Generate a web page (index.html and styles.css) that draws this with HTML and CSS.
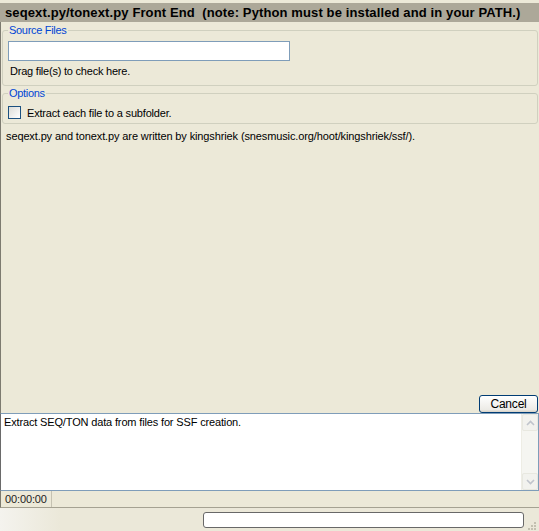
FILE: index.html
```html
<!DOCTYPE html>
<html>
<head>
<meta charset="utf-8">
<link rel="stylesheet" href="styles.css">
</head>
<body>
<div class="win">
  <div class="title">seqext.py/tonext.py Front End&nbsp; (note: Python must be installed and in your PATH.)</div>
  <div class="main">
    <fieldset class="group group-src">
      <legend>Source Files</legend>
      <div class="input"></div>
      <div class="hint">Drag file(s) to check here.</div>
    </fieldset>
    <fieldset class="group group-opt">
      <legend>Options</legend>
      <label class="check"><span class="box"></span><span>Extract each file to a subfolder.</span></label>
    </fieldset>
    <div class="credit">seqext.py and tonext.py are written by kingshriek (snesmusic.org/hoot/kingshriek/ssf/).</div>
    <div class="spacer"></div>
    <div class="btnrow"><div class="btn">Cancel</div></div>
  </div>
  <div class="log">
    <div class="logtext">Extract SEQ/TON data from files for SSF creation.</div>
    <div class="scroll">
      <div class="arrow up"><svg width="9" height="6" viewBox="0 0 9 6"><path d="M1 5 L4.5 1.5 L8 5" fill="none" stroke="#c0c4cc" stroke-width="1.6"/></svg></div>
      <div class="track"></div>
      <div class="arrow down"><svg width="9" height="6" viewBox="0 0 9 6"><path d="M1 1 L4.5 4.5 L8 1" fill="none" stroke="#c0c4cc" stroke-width="1.6"/></svg></div>
    </div>
  </div>
  <div class="status">
    <div class="time">00:00:00</div>
    <div class="rest"></div>
  </div>
  <div class="bottom">
    <div class="progress"></div>
    <div class="grip">
      <svg width="11" height="11" viewBox="0 0 11 11">
        <g fill="#c3c0b0">
          <rect x="8" y="2" width="2" height="2"/>
          <rect x="5" y="5" width="2" height="2"/><rect x="8" y="5" width="2" height="2"/>
          <rect x="2" y="8" width="2" height="2"/><rect x="5" y="8" width="2" height="2"/><rect x="8" y="8" width="2" height="2"/>
        </g>
      </svg>
    </div>
  </div>
</div>
</body>
</html>
```
FILE: styles.css
```css
* { box-sizing: border-box; }
html, body { margin: 0; padding: 0; }
body {
  width: 539px;
  height: 531px;
  overflow: hidden;
  background: #ece9d8;
  font-family: "Liberation Sans", Arial, sans-serif;
  font-size: 11px;
  letter-spacing: -0.12px;
  color: #000;
}
.win {
  width: 539px;
  height: 531px;
  display: flex;
  flex-direction: column;
}
.title {
  margin-top: 3px;
  height: 19px;
  background: #aca899;
  font-weight: bold;
  font-size: 13px;
  letter-spacing: 0.12px;
  line-height: 19px;
  padding-left: 5px;
  white-space: nowrap;
  color: #000;
}
.main {
  flex: 1;
  display: flex;
  flex-direction: column;
  border-left: 1px solid #7d7b70;
  padding: 2px 1px 0 1px;
}
.group {
  margin: 0;
  border: 1px solid #d0d0bf;
  border-radius: 3px;
  padding: 0 4px;
  min-width: 0;
}
.group legend {
  color: #0046d5;
  padding: 0 1px;
  margin-left: 1px;
  font-size: 11px;
  letter-spacing: -0.3px;
  line-height: 13px;
}
.group-src { height: 62px; }
.group-opt { height: 37px; margin-top: 1px; }
.input {
  width: 282px;
  height: 20px;
  background: #fff;
  border: 1px solid #7f9db9;
  margin-top: 4px;
  margin-left: 1px;
}
.hint {
  margin: 4px 0 0 3px;
  letter-spacing: -0.22px;
  line-height: 13px;
}
.check {
  display: flex;
  align-items: center;
  gap: 6px;
  margin-top: 6px;
  margin-left: 1px;
  letter-spacing: -0.18px;
}
.box {
  width: 13px;
  height: 13px;
  border: 1px solid #1c5180;
  background: linear-gradient(135deg, #dcdcd7, #fff);
}
.credit {
  margin: 6px 0 0 4px;
  line-height: 13px;
}
.spacer { flex: 1; }
.btnrow {
  display: flex;
  justify-content: flex-end;
}
.btn {
  width: 59px;
  height: 18px;
  border: 1px solid #003c74;
  border-radius: 3px;
  background: linear-gradient(#fff, #ecebe6 85%, #d6d0c5);
  font-size: 12px;
  letter-spacing: -0.2px;
  line-height: 16px;
  text-align: center;
}
.log {
  height: 78px;
  background: #fff;
  border: 1px solid #7f9db9;
  border-left-color: #6a6a6a;
  display: flex;
}
.logtext {
  flex: 1;
  padding: 2px 0 0 3px;
  letter-spacing: -0.15px;
  line-height: 13px;
}
.scroll {
  width: 17px;
  background: #f3f3ef;
  display: flex;
  flex-direction: column;
  border-left: 1px solid #eeede5;
}
.arrow {
  height: 17px;
  background: #f2f2ee;
  border: 1px solid #e8e8e0;
  border-radius: 2px;
  display: flex;
  align-items: center;
  justify-content: center;
}
.track { flex: 1; background: #f5f5f1; }
.status {
  height: 17px;
  display: flex;
  border-left: 1px solid #7d7b70;
  border-bottom: 1px solid #a5a292;
}
.time {
  width: 51px;
  border-right: 1px solid #c5c2b2;
  padding-left: 4px;
  line-height: 16px;
  color: #222;
}
.rest { flex: 1; }
.bottom {
  flex: 0 0 23px;
  background: linear-gradient(90deg, #f4f3ee 0, #ebe8d9 60px, #ebe8d9 100%);
  display: flex;
  align-items: center;
  padding-left: 203px;
}
.progress {
  width: 321px;
  height: 16px;
  background: #fff;
  border: 1px solid #686868;
  border-radius: 3px;
}
.grip {
  width: 15px;
  height: 23px;
  display: flex;
  align-items: flex-end;
  justify-content: center;
}
```
